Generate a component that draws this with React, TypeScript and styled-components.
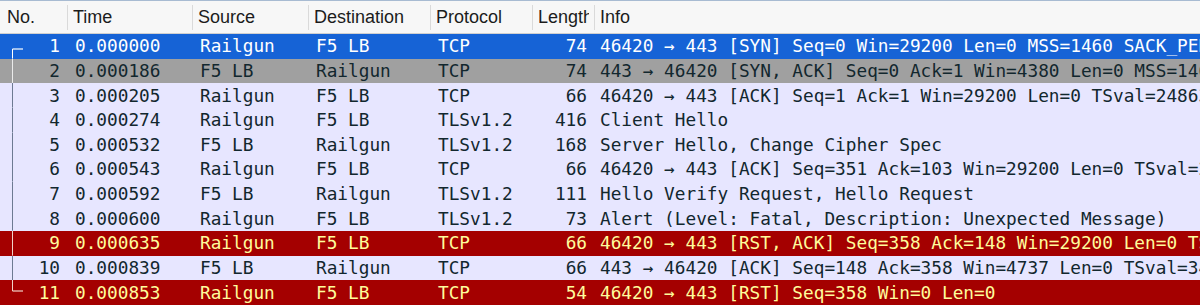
import styled, { createGlobalStyle } from "styled-components";

type Tone = "selected" | "syn" | "normal" | "reset";
type Mark = "first" | "mid" | "last";

interface Packet {
  no: number;
  time: string;
  src: string;
  dst: string;
  proto: string;
  len: number;
  info: string;
  tone: Tone;
}

const packets: Packet[] = [
  { no: 1, time: "0.000000", src: "Railgun", dst: "F5 LB", proto: "TCP", len: 74, info: "46420 → 443 [SYN] Seq=0 Win=29200 Len=0 MSS=1460 SACK_PERM=1 TSval=248632 TSecr=0 WS=128", tone: "selected" },
  { no: 2, time: "0.000186", src: "F5 LB", dst: "Railgun", proto: "TCP", len: 74, info: "443 → 46420 [SYN, ACK] Seq=0 Ack=1 Win=4380 Len=0 MSS=1460 TSval=34829 TSecr=248632", tone: "syn" },
  { no: 3, time: "0.000205", src: "Railgun", dst: "F5 LB", proto: "TCP", len: 66, info: "46420 → 443 [ACK] Seq=1 Ack=1 Win=29200 Len=0 TSval=248632 TSecr=34829", tone: "normal" },
  { no: 4, time: "0.000274", src: "Railgun", dst: "F5 LB", proto: "TLSv1.2", len: 416, info: "Client Hello", tone: "normal" },
  { no: 5, time: "0.000532", src: "F5 LB", dst: "Railgun", proto: "TLSv1.2", len: 168, info: "Server Hello, Change Cipher Spec", tone: "normal" },
  { no: 6, time: "0.000543", src: "Railgun", dst: "F5 LB", proto: "TCP", len: 66, info: "46420 → 443 [ACK] Seq=351 Ack=103 Win=29200 Len=0 TSval=248632 TSecr=34829", tone: "normal" },
  { no: 7, time: "0.000592", src: "F5 LB", dst: "Railgun", proto: "TLSv1.2", len: 111, info: "Hello Verify Request, Hello Request", tone: "normal" },
  { no: 8, time: "0.000600", src: "Railgun", dst: "F5 LB", proto: "TLSv1.2", len: 73, info: "Alert (Level: Fatal, Description: Unexpected Message)", tone: "normal" },
  { no: 9, time: "0.000635", src: "Railgun", dst: "F5 LB", proto: "TCP", len: 66, info: "46420 → 443 [RST, ACK] Seq=358 Ack=148 Win=29200 Len=0 TSval=248632 TSecr=34829", tone: "reset" },
  { no: 10, time: "0.000839", src: "F5 LB", dst: "Railgun", proto: "TCP", len: 66, info: "443 → 46420 [ACK] Seq=148 Ack=358 Win=4737 Len=0 TSval=34829 TSecr=248632", tone: "normal" },
  { no: 11, time: "0.000853", src: "Railgun", dst: "F5 LB", proto: "TCP", len: 54, info: "46420 → 443 [RST] Seq=358 Win=0 Len=0", tone: "reset" },
];

const tones: Record<Tone, { bg: string; fg: string; line: string }> = {
  selected: { bg: "#1663d6", fg: "#ffffff", line: "#ffffff" },
  syn: { bg: "#a0a0a0", fg: "#12272e", line: "#ebebeb" },
  normal: { bg: "#e7e6ff", fg: "#12272e", line: "#6d7a92" },
  reset: { bg: "#a40000", fg: "#fffc9c", line: "#f1d2c8" },
};

const COLS = "67px 125px 116px 122px 102px 62px 1fr";

const GlobalStyle = createGlobalStyle`
  html, body {
    margin: 0;
    padding: 0;
    background: #ffffff;
  }
`;

const Table = styled.div`
  width: 1200px;
  overflow: hidden;
`;

const HeaderRow = styled.div`
  display: grid;
  grid-template-columns: ${COLS};
  height: 32px;
  background: #f7f7f7;
  border-top: 1px solid #a8bbd2;
  border-bottom: 1px solid #d0d0d0;
`;

const HeaderCell = styled.div`
  position: relative;
  display: flex;
  align-items: center;
  padding: 0 5px 0 6px;
  white-space: nowrap;
  font-family: "Liberation Sans", Arial, sans-serif;
  font-size: 18px;
  color: #1c1c1c;

  &:first-child {
    padding-left: 7px;
  }

  & + &::before {
    content: "";
    position: absolute;
    left: 0;
    top: 4px;
    bottom: 3px;
    width: 1px;
    background: #dadada;
  }
`;

const Label = styled.span`
  display: block;
  overflow: hidden;
  min-width: 0;
`;

const Row = styled.div<{ $tone: Tone }>`
  display: grid;
  grid-template-columns: ${COLS};
  height: 24.64px;
  background: ${({ $tone }) => tones[$tone].bg};
  color: ${({ $tone }) => tones[$tone].fg};
  font-family: "DejaVu Sans Mono", Menlo, monospace;
  font-size: 17.75px;
`;

const Cell = styled.div<{ $align?: "left" | "right" }>`
  position: relative;
  display: flex;
  align-items: center;
  justify-content: ${({ $align }) => ($align === "right" ? "flex-end" : "flex-start")};
  padding: 0 7px 0 8px;
  overflow: hidden;
  white-space: nowrap;
`;

const InfoCell = styled(Cell)`
  padding-left: 6px;
  padding-right: 0;
`;

const Marker = styled.svg`
  position: absolute;
  left: 0;
  top: 0;
  width: 30px;
  height: 100%;
  overflow: visible;
`;

function ConvLine({ mark, color }: { mark: Mark; color: string }) {
  return (
    <Marker>
      {mark === "first" && (
        <>
          <line x1="12.5" y1="15" x2="23" y2="15" stroke={color} strokeWidth="1.2" />
          <line x1="12.5" y1="15" x2="12.5" y2="100%" stroke={color} strokeWidth="1" />
        </>
      )}
      {mark === "mid" && <line x1="12.5" y1="0" x2="12.5" y2="100%" stroke={color} strokeWidth="1" />}
      {mark === "last" && (
        <>
          <line x1="12.5" y1="0" x2="12.5" y2="11" stroke={color} strokeWidth="1" />
          <line x1="12.5" y1="11" x2="23" y2="11" stroke={color} strokeWidth="1.2" />
        </>
      )}
    </Marker>
  );
}

const headers = ["No.", "Time", "Source", "Destination", "Protocol", "Length", "Info"];

export default function App() {
  return (
    <>
      <GlobalStyle />
      <Table>
        <HeaderRow>
          {headers.map((h) => (
            <HeaderCell key={h}>
              <Label>{h}</Label>
            </HeaderCell>
          ))}
        </HeaderRow>
        {packets.map((p, i) => {
          const mark: Mark = i === 0 ? "first" : i === packets.length - 1 ? "last" : "mid";
          return (
            <Row key={p.no} $tone={p.tone}>
              <Cell $align="right">
                <ConvLine mark={mark} color={tones[p.tone].line} />
                {p.no}
              </Cell>
              <Cell>{p.time}</Cell>
              <Cell>{p.src}</Cell>
              <Cell>{p.dst}</Cell>
              <Cell>{p.proto}</Cell>
              <Cell $align="right">{p.len}</Cell>
              <InfoCell>{p.info}</InfoCell>
            </Row>
          );
        })}
      </Table>
    </>
  );
}
